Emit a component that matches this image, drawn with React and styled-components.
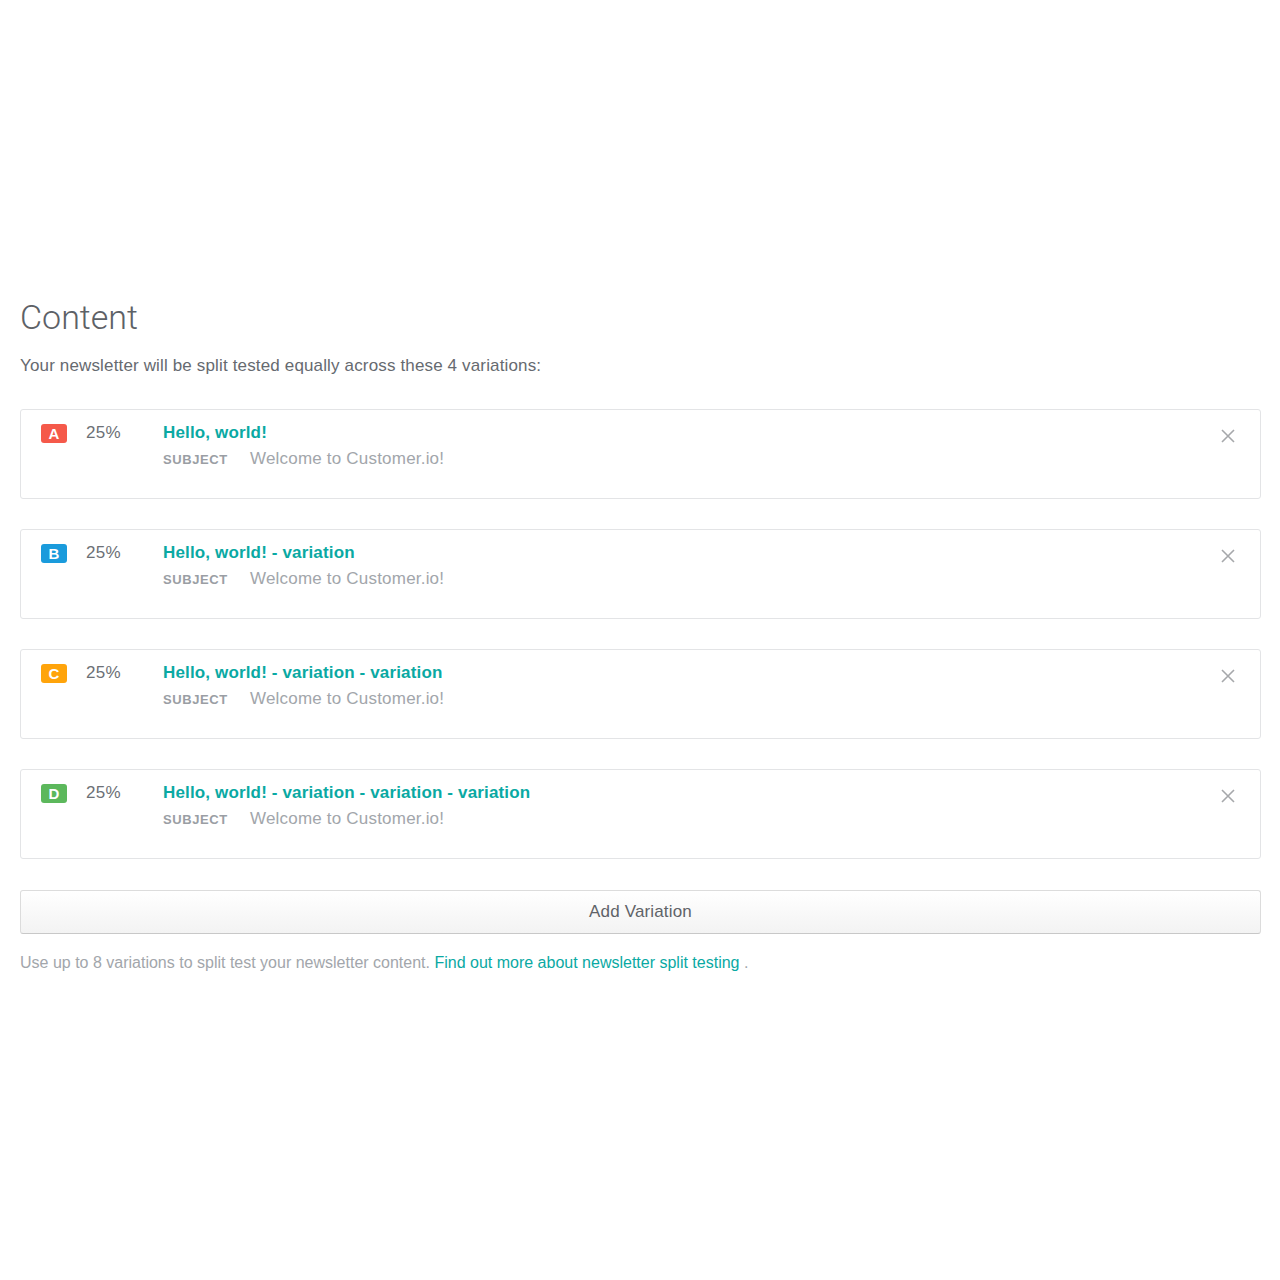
import React from 'react'
import styled, {createGlobalStyle} from 'styled-components'

const GlobalStyle = createGlobalStyle`
  body {
    margin: 0;
    background: #fff;
    font-family: "Liberation Sans", Arial, sans-serif;
  }
`

const Page = styled.div`
  padding: 296px 19px 0 20px;
  width: 1280px;
  box-sizing: border-box;
`

const Heading = styled.h1`
  margin: 0;
  font-family: Roboto, "Liberation Sans", sans-serif;
  font-weight: 300;
  font-size: 34px;
  line-height: 42px;
  color: #5d6166;
`

const Intro = styled.p`
  margin: 17px 0 0;
  font-size: 17px;
  letter-spacing: 0.15px;
  line-height: 22px;
  color: #666a70;
`

const List = styled.div`
  margin-top: 32px;
  display: flex;
  flex-direction: column;
  gap: 30px;
`

const Card = styled.div`
  position: relative;
  height: 90px;
  box-sizing: border-box;
  border: 1px solid #e3e4e6;
  border-radius: 3px;
  padding: 12px 20px 0;
  display: flex;
  align-items: flex-start;
`

const Badge = styled.span`
  flex: none;
  width: 26px;
  height: 19px;
  margin-top: 2px;
  border-radius: 3px;
  background: ${p => p.$color};
  color: #fff;
  font-weight: bold;
  font-size: 15px;
  line-height: 19px;
  text-align: center;
`

const Percent = styled.span`
  flex: none;
  width: 77px;
  margin-left: 19px;
  font-size: 17px;
  letter-spacing: 0.3px;
  line-height: 22px;
  color: #6c7076;
`

const Body = styled.div`
  display: flex;
  flex-direction: column;
`

const Title = styled.div`
  font-weight: bold;
  font-size: 17px;
  letter-spacing: 0.15px;
  line-height: 22px;
  color: #0aa9a3;
`

const SubjectRow = styled.div`
  display: flex;
  align-items: baseline;
  margin-top: 4px;
  line-height: 22px;
`

const Label = styled.span`
  width: 87px;
  font-size: 13px;
  font-weight: bold;
  letter-spacing: 0.6px;
  color: #9a9ea4;
`

const Subject = styled.span`
  font-size: 17px;
  letter-spacing: 0.2px;
  color: #a2a6ab;
`

const Close = styled.button`
  position: absolute;
  top: 19px;
  right: 25px;
  padding: 0;
  border: 0;
  background: none;
  cursor: pointer;
  line-height: 0;
`

const AddButton = styled.button`
  display: block;
  width: 100%;
  margin-top: 31px;
  height: 44px;
  border: 1px solid #dcdcdc;
  border-bottom-color: #c8c8c8;
  border-radius: 3px;
  background: linear-gradient(#ffffff, #f3f3f3);
  font-family: "Liberation Sans", Arial, sans-serif;
  font-size: 17px;
  letter-spacing: 0.15px;
  color: #5f6368;
  cursor: pointer;
`

const Note = styled.p`
  margin: 18px 0 0;
  font-size: 16px;
  line-height: 22px;
  color: #a2a6ab;
`

const Link = styled.a`
  color: #0aa9a3;
  text-decoration: none;
`

const variations = [
  {letter: 'A', color: '#f5594a', title: 'Hello, world!'},
  {letter: 'B', color: '#1a9bdc', title: 'Hello, world! - variation'},
  {letter: 'C', color: '#ffa40b', title: 'Hello, world! - variation - variation'},
  {letter: 'D', color: '#5cb85c', title: 'Hello, world! - variation - variation - variation'},
]

const CloseIcon = () => (
  <svg width="14" height="14" viewBox="0 0 14 14">
    <path d="M1 1 L13 13 M13 1 L1 13" stroke="#a6a8ab" strokeWidth="1.6" fill="none"/>
  </svg>
)

export default function App() {
  return (
    <Page>
      <GlobalStyle/>
      <Heading>Content</Heading>
      <Intro>Your newsletter will be split tested equally across these 4 variations:</Intro>
      <List>
        {variations.map(v => (
          <Card key={v.letter}>
            <Badge $color={v.color}>{v.letter}</Badge>
            <Percent>25%</Percent>
            <Body>
              <Title>{v.title}</Title>
              <SubjectRow>
                <Label>SUBJECT</Label>
                <Subject>Welcome to Customer.io!</Subject>
              </SubjectRow>
            </Body>
            <Close aria-label="Remove"><CloseIcon/></Close>
          </Card>
        ))}
      </List>
      <AddButton>Add Variation</AddButton>
      <Note>
        Use up to 8 variations to split test your newsletter content.{' '}
        <Link href="#">Find out more about newsletter split testing</Link> .
      </Note>
    </Page>
  )
}
